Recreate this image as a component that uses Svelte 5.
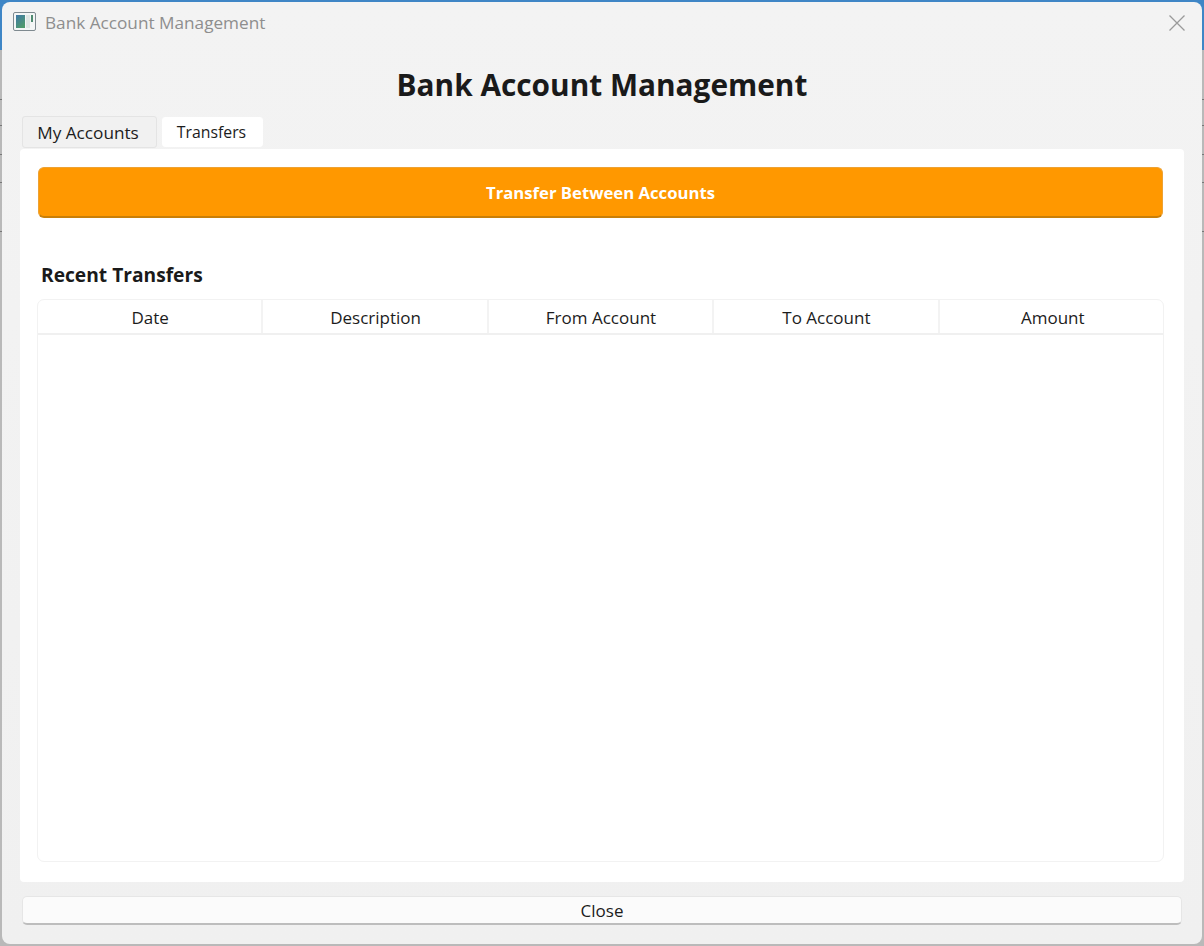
<script>
	const columns = ['Date', 'Description', 'From Account', 'To Account', 'Amount'];
</script>

<div class="desktop">
	<div class="window">
		<header class="titlebar">
			<svg class="app-icon" width="24" height="20" viewBox="0 0 24 20">
				<defs>
					<linearGradient id="pane" x1="0" y1="0" x2="0.6" y2="1">
						<stop offset="0" stop-color="#3f78a8" />
						<stop offset="1" stop-color="#4f9a6c" />
					</linearGradient>
				</defs>
				<rect x="0.5" y="0.5" width="22" height="18" rx="1.5" fill="#f4f6f6" stroke="#7f8a90" />
				<rect x="3" y="3" width="9" height="13" fill="url(#pane)" />
				<rect x="13" y="3" width="4" height="13" fill="#dfe6e4" />
				<rect x="18" y="3" width="2" height="7" fill="#4f8a70" />
			</svg>
			<span class="window-title">Bank Account Management</span>
			<svg class="close-x" width="16" height="16" viewBox="0 0 16 16">
				<path d="M0.5 0.5 L15.5 15.5 M15.5 0.5 L0.5 15.5" stroke="#9a9a9a" stroke-width="1.3" fill="none" />
			</svg>
		</header>

		<h1>Bank Account Management</h1>

		<div class="tabs">
			<div class="tab">My Accounts</div>
			<div class="tab active">Transfers</div>
		</div>

		<main class="panel">
			<button class="transfer">Transfer Between Accounts</button>
			<h2>Recent Transfers</h2>
			<div class="table">
				<div class="thead">
					{#each columns as col}
						<div class="th">{col}</div>
					{/each}
				</div>
			</div>
		</main>

		<footer>
			<button class="close">Close</button>
		</footer>
	</div>
</div>

<style>
	:global(body) {
		margin: 0;
		background: #b4b4b4;
	}

	.desktop {
		width: 1204px;
		height: 946px;
		box-sizing: border-box;
		padding: 2px;
		overflow: hidden;
		background:
			linear-gradient(#3f86c6 0 50px, transparent 50px),
			linear-gradient(transparent 99px, #777 99px 100px, transparent 100px 125px, #777 125px 126px, transparent 126px 154px, #777 154px 155px, transparent 155px 182px, #777 182px 183px, transparent 183px 231px, #777 231px 232px, transparent 232px),
			#b9b9b9;
		font-family: "Open Sans", "Noto Sans", sans-serif;
	}

	.window {
		height: 942px;
		box-sizing: border-box;
		display: flex;
		flex-direction: column;
		background: linear-gradient(#f3f3f3, #f0f0f0);
		border-radius: 8px;
		padding-bottom: 19px;
	}

	.titlebar {
		height: 42px;
		flex: none;
		box-sizing: border-box;
		display: flex;
		align-items: center;
		padding: 0 17px 2px 11px;
	}

	.app-icon {
		flex: none;
		margin-right: 8px;
	}

	.window-title {
		flex: 1;
		font-size: 17.2px;
		color: #8e8e8e;
	}

	.close-x {
		flex: none;
		margin-top: 1px;
	}

	h1 {
		margin: 0;
		height: 72px;
		flex: none;
		line-height: 82px;
		text-align: center;
		font-size: 29.8px;
		font-weight: 700;
		color: #1a1a1a;
	}

	.tabs {
		display: flex;
		flex: none;
		gap: 5px;
		height: 33px;
		margin-left: 20px;
		box-sizing: border-box;
		padding-bottom: 1px;
	}

	.tab {
		box-sizing: border-box;
		height: 32px;
		display: flex;
		align-items: center;
		justify-content: center;
		width: 135px;
		border: 1px solid #e4e4e4;
		border-radius: 3px;
		background: #f1f1f1;
		font-size: 17.2px;
		color: #1c1c1c;
		padding: 1px 3px 0 0;
	}

	.tab.active {
		width: 101px;
		height: 30px;
		margin-top: 1px;
		padding: 0 2px 1px 0;
		border-color: #fff;
		background: #fff;
		font-size: 15.8px;
	}

	.panel {
		flex: 1;
		min-height: 0;
		margin: 0 18px;
		padding: 18px 20px 20px 17px;
		display: flex;
		flex-direction: column;
		background: #fff;
		border-radius: 4px;
		box-sizing: border-box;
	}

	.transfer {
		flex: none;
		height: 51px;
		margin: 0 1px 0 1px;
		border: 1px solid #eda234;
		border-bottom: 2px solid #c97f08;
		border-radius: 6px;
		background: #ff9800;
		color: #fff;
		font-family: inherit;
		font-size: 16.7px;
		font-weight: 700;
	}

	h2 {
		margin: 42px 0 9px 4px;
		flex: none;
		height: 30px;
		line-height: 30px;
		font-size: 19.2px;
		font-weight: 700;
		color: #1a1a1a;
	}

	.table {
		flex: 1;
		min-height: 0;
		border: 1px solid #f2f2f2;
		border-radius: 7px;
		overflow: hidden;
	}

	.thead {
		display: grid;
		grid-template-columns: repeat(5, 1fr);
		height: 35px;
		margin-right: -2px;
		border-bottom: 2px solid #f0f0f0;
		box-sizing: border-box;
	}

	.th {
		display: flex;
		align-items: center;
		justify-content: center;
		padding: 2px 0 0 1px;
		font-size: 17px;
		color: #1c1c1c;
		border-right: 2px solid #f3f3f3;
	}

	.th:last-child {
		border-right: none;
	}

	footer {
		flex: none;
		padding: 14px 20px 0;
	}

	.close {
		display: block;
		width: 100%;
		height: 29px;
		box-sizing: border-box;
		border: 1px solid #e6e6e6;
		border-bottom: 2px solid #bdbdbd;
		border-radius: 5px;
		background: #fbfbfb;
		font-family: inherit;
		font-size: 17px;
		color: #1c1c1c;
		padding: 1px 0 0;
	}
</style>
